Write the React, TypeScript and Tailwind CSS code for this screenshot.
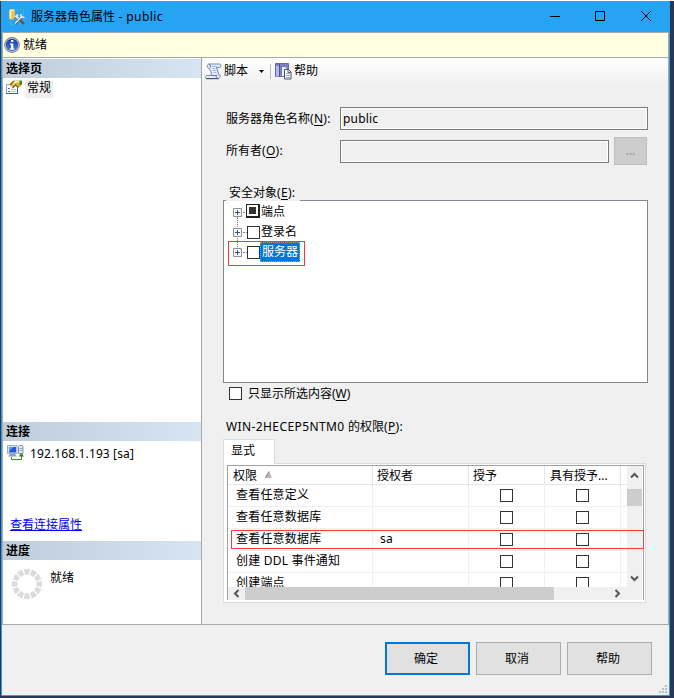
import type { ReactNode } from "react";
import clsx from "clsx";

const permissions = [
  { name: "查看任意定义", grantor: "" },
  { name: "查看任意数据库", grantor: "" },
  { name: "查看任意数据库", grantor: "sa" },
  { name: "创建 DDL 事件通知", grantor: "" },
  { name: "创建端点", grantor: "" },
];

const securables = [
  { name: "端点", partial: true, selected: false },
  { name: "登录名", partial: false, selected: false },
  { name: "服务器", partial: false, selected: true },
];

function DatabaseToolsIcon() {
  return (
    <svg width="16" height="16" viewBox="0 0 16 16" className="shrink-0">
      <path d="M7 .5h7.500V8M1.500 12v3.500H7" fill="none" stroke="#4fc9a0" strokeDasharray="1 1" />
      <path d="M0 1.500C0-.3 6-.3 6 1.500v7.500c0 2-6 2-6 0z" fill="#f0bd48" />
      <path d="M1.500 2v7.500" stroke="#fff2b4" strokeWidth="1.600" />
      <ellipse cx="3" cy="1.500" rx="2.700" ry="1.100" fill="#fbe7a0" />
      <path d="M7 7l4 4" stroke="#e8ecf0" strokeWidth="2" />
      <path d="M10 10l5 5" stroke="#7a4c28" strokeWidth="2.400" />
      <path d="M13 7.500L6 15" stroke="#5b656e" strokeWidth="2.600" />
      <path d="M12.800 7.500L6 14.500" stroke="#eef2f5" strokeWidth="1.300" />
      <path d="M12 5v3l3.500.500" fill="none" stroke="#e9eef2" strokeWidth="1.500" />
      <path d="M5.500 9l3.500-3.500" stroke="#dfe4e8" strokeWidth="2.200" />
      <path d="M5 9.500l2-1" stroke="#4f5a63" />
    </svg>
  );
}

function InfoIcon() {
  return (
    <svg width="16" height="16" viewBox="0 0 16 16" className="shrink-0">
      <defs>
        <linearGradient id="info" x1="0" y1="0" x2="0" y2="1">
          <stop offset="0" stopColor="#1a3f9f" />
          <stop offset="1" stopColor="#4478dc" />
        </linearGradient>
      </defs>
      <circle cx="8" cy="8" r="7.900" fill="#7b7e88" />
      <circle cx="8" cy="8" r="7" fill="#c3c6d0" />
      <circle cx="8" cy="8" r="6.200" fill="url(#info)" />
      <path d="M7 3h2.400v2H7zM6 6.400h3.300v5H10.500v1.300H5.800v-1.300H7V7.700H6z" fill="#fff" />
    </svg>
  );
}

function PropertiesIcon() {
  return (
    <svg width="16" height="16" viewBox="0 0 16 16" className="shrink-0">
      <path d="M.5 4.500h11v9H.5z" fill="#fafcff" stroke="#93a4c0" />
      <path d="M0 13.500h12M11.500 5v9" stroke="#4a6292" />
      <path d="M2 8.500h2M2 11.500h2" stroke="#4d72b8" />
      <path d="M5 9.500h5M5 11.500h5" stroke="#b9c4d8" />
      <path d="M4 4l4-3.500h5.500l1.500 2v4l-3 .500-2.500-2L7 7.500 5 6z" fill="#d9ae38" />
      <path d="M8 1h4.500l1 1.500-4 .500-3 2.500" fill="#fff0a0" />
      <path d="M4 5l4-4M6.500 8l3-3 3 2.500" fill="none" stroke="#795e1c" strokeWidth="1.200" />
      <path d="M13.500 .5H16v4.500h-2.500z" fill="#42903c" />
    </svg>
  );
}

function ServerLinkIcon() {
  return (
    <svg width="17" height="17" viewBox="0 0 17 17" className="shrink-0">
      <path d="M11.500 1.500l1-1h3l.5 1v7h-4.500z" fill="#e5eaf2" stroke="#8594ac" />
      <path d="M12.500 3.500h3M12.500 5.500h3" stroke="#8ba0c4" />
      <path d="M.5.500h9.500v8H.5z" fill="#dce5f4" stroke="#9aaccb" />
      <path d="M2 2h7v5.500H2z" fill="#2455d8" />
      <path d="M2 2h4.500L2 6.500z" fill="#5d98ff" />
      <path d="M3 9h5l2 2.500H1z" fill="#8c9cb8" />
      <path d="M4.500 12v2.500h10V10" fill="none" stroke="#3b8f12" />
      <path d="M11.500 11.500l3-3.500 2.500 3.500z" fill="#2f8a0c" />
    </svg>
  );
}

function ScriptIcon() {
  return (
    <svg width="17" height="17" viewBox="0 0 17 17" className="shrink-0">
      <path
        d="M4 1h10.500c1.700 0 1.700 3.500 0 3.500H11.500L14 12h.5c1.200 0 1 1.500.5 2l-1.500 1.500H1.500C0 15.500 0 12.500 2 12.500h4.500L6 8.500 4 5.500C1.500 5 2 1 4 1z"
        fill="#e4ecfc"
        stroke="#7388ae"
      />
      <path d="M4 1.500c2 0 2 3 .5 3.500M7 12.500h5c-1.500 1-1 2.500.500 2.500" fill="none" stroke="#5f79ab" />
      <path d="M7 3.500h5M7.500 5.500H10M8 7.500h3M8.500 9.500h3" stroke="#a0b7e4" />
      <path d="M1 15.700h12.500" stroke="#33486f" />
    </svg>
  );
}

function HelpBooksIcon() {
  return (
    <svg width="17" height="17" viewBox="0 0 17 17" className="shrink-0">
      <path d="M.5.500h13v13H.5z" fill="#7d80c6" stroke="#6669ac" />
      <path d="M1 3h3v10.500H1z" fill="#b6b9e8" />
      <path d="M4.500 1v13" stroke="#4f5396" />
      <path d="M6.500 3.500h4l1.500 2v8H6.500z" fill="#e7edf8" stroke="#7281a0" />
      <path d="M9.500 6.500h4l2.500 2.500v7H9.500z" fill="#fff" stroke="#43546f" />
      <path d="M13 6.500v3h3" fill="none" stroke="#52627e" />
      <path d="M11 10.500h4M11 12.500h4M11 14.500h4" stroke="#9fb2d2" />
    </svg>
  );
}

function Spinner() {
  return (
    <svg width="32" height="32" viewBox="0 0 32 32" className="shrink-0">
      {Array.from({ length: 12 }, (_, i) => (
        <path key={i} d="M12.800 1.200Q16 .5 19.200 1.200L17.900 6.700H14.100z" fill="#dcdcdc" transform={`rotate(${i * 30} 16 16)`} />
      ))}
    </svg>
  );
}

function Chevron({ d }: { d: string }) {
  return (
    <svg width="9" height="9" viewBox="0 0 9 9">
      <path d={d} fill="none" stroke="#555" strokeWidth="2" />
    </svg>
  );
}

function CheckBox({ className }: { className?: string }) {
  return <span className={clsx("block size-[13px] shrink-0 border border-[#333] bg-white", className)} />;
}

function PanelHeader({ children }: { children: ReactNode }) {
  return (
    <h2 className="flex h-[19px] items-center bg-linear-to-r from-[#bfcddb] to-[#d7e4f2] pl-[3px] text-xs font-bold">
      {children}
    </h2>
  );
}

function Hotkey({ label, k }: { label: string; k: string }) {
  return (
    <span className="whitespace-nowrap">
      {label}
      <span className="tracking-[0.3px]">
        (<u className="underline-offset-2">{k}</u>):
      </span>
    </span>
  );
}

function Sidebar() {
  return (
    <aside className="flex w-[199px] flex-col border-r border-[#a5a5a9] bg-white pt-px">
      <PanelHeader>选择页</PanelHeader>
      <div className="flex h-[344px] items-start gap-[3px] pl-[3px] pt-[2px]">
        <PropertiesIcon />
        <span className="h-[18px] bg-[#f0f0f0] px-[2px] leading-[16px]">常规</span>
      </div>
      <PanelHeader>连接</PanelHeader>
      <div className="flex h-[100px] flex-col justify-between pb-[7px] pl-1 pt-1">
        <div className="flex gap-[6px]">
          <ServerLinkIcon />
          <span className="leading-[18px] tracking-[0.120px]">192.168.1.193 [sa]</span>
        </div>
        <a className="pl-[3px] leading-[18px] text-[#0000ff] underline">查看连接属性</a>
      </div>
      <PanelHeader>进度</PanelHeader>
      <div className="flex gap-[7px] pl-2 pt-2">
        <Spinner />
        <span className="leading-[19px]">就绪</span>
      </div>
    </aside>
  );
}

function Toolbar() {
  return (
    <div className="flex h-[26px] items-center rounded-r-sm bg-linear-to-b from-white to-[#f0f0f0] pl-[3px]">
      <ScriptIcon />
      <span className="ml-[2px]">脚本</span>
      <svg width="5" height="3" viewBox="0 0 5 3" className="ml-[11px]">
        <path d="M0 0h5L2.500 3z" />
      </svg>
      <span className="ml-[6px] h-[15px] w-px bg-[#bdbdbd]" />
      <span className="ml-1">
        <HelpBooksIcon />
      </span>
      <span className="ml-[2px]">帮助</span>
    </div>
  );
}

function SecurablesTree() {
  return (
    <div className="relative h-[183px] w-[425px] border border-[#828790] bg-white pl-[9px] pt-px">
      <span className="absolute -top-px left-[2px] h-px w-[74px] bg-[#f0f0f0]" />
      <span className="absolute left-[13px] top-[16px] h-[32px] border-l border-dotted border-[#808080]" />
      {securables.map((item) => (
        <div key={item.name} className="relative flex h-5 items-center">
          <svg width="9" height="9" viewBox="0 0 9 9">
            <path d="M.5.5h8v8h-8z" fill="#f8f8f8" stroke="#919191" />
            <path d="M2 4.500h5M4.500 2v5" stroke="#3c4f8c" />
          </svg>
          <span className="ml-px w-[4px] border-t border-dotted border-[#808080]" />
          {item.partial ? (
            <span className="-ml-px mb-[2px] flex size-[14px] items-center justify-center border border-b-2 border-r-2 border-[#222] bg-white">
              <span className="size-[7px] bg-[#333]" />
            </span>
          ) : (
            <CheckBox />
          )}
          <span
            className={clsx(
              "h-5",
              item.selected
                ? "w-10 border border-dotted border-[#ff8728] bg-[#0078d7] pl-px leading-[17px] text-white"
                : "pl-px leading-[19px]"
            )}
          >
            {item.name}
          </span>
        </div>
      ))}
      <span className="absolute left-[4px] top-[40px] h-[25px] w-[77px] border border-[#f83a3a]" />
    </div>
  );
}

function PermissionsGrid() {
  const cols = "grid grid-cols-[145px_96px_76px_76px_6px]";
  return (
    <div className="relative h-[135px] w-[417px] border border-b-0 border-[#a0a0a0] bg-white">
      <div className="flex h-[121px]">
        <div className="w-[399px] overflow-hidden">
          <div className={clsx(cols, "h-[19px] border-b border-[#e8e8e8] leading-[19px] *:border-r *:border-[#e5e5e5]")}>
            <span className="flex items-center gap-2 pl-[5px]">
              权限
              <svg width="7" height="7" viewBox="0 0 7 7" className="mb-[2px]">
                <path d="M0 7L4 0l3 7z" fill="#b8b8b8" />
                <path d="M.5 6.500L4 .5" stroke="#858585" />
              </svg>
            </span>
            <span className="pl-1">授权者</span>
            <span className="pl-1">授予</span>
            <span className="pl-[5px]">具有授予...</span>
          </div>
          {permissions.map((row, i) => (
            <div key={i} className={clsx(cols, "h-[22px] border-b border-[#f0f0f0] leading-[20px] *:border-r *:border-[#f0f0f0]")}>
              <span className="pl-2 tracking-[0.200px]">{row.name}</span>
              <span className="pl-[7px] tracking-[0.300px]">{row.grantor}</span>
              <span className="flex items-center justify-center">
                <CheckBox />
              </span>
              <span className="flex items-center justify-center">
                <CheckBox />
              </span>
            </div>
          ))}
        </div>
        <div className="flex w-[15px] flex-col items-center bg-[#f0f0f0] pb-1 pt-[5px]">
          <Chevron d="M1 6.500L4.500 3 8 6.500" />
          <span className="mt-[9px] h-[17px] w-full bg-[#cdcdcd]" />
          <span className="flex-1" />
          <Chevron d="M1 2.500L4.500 6 8 2.500" />
        </div>
      </div>
      <div className="mr-px flex h-[13px] items-center bg-[#f0f0f0] pl-1">
        <Chevron d="M6.500 1L3 4.500 6.500 8" />
        <span className="ml-1 h-full w-[309px] bg-[#cdcdcd]" />
        <span className="ml-[59px]">
          <Chevron d="M2.500 1L6 4.500 2.500 8" />
        </span>
      </div>
      <span className="absolute left-[3px] top-[64px] h-[19px] w-[413px] border border-[#f83a3a]" />
    </div>
  );
}

function RoleForm() {
  return (
    <div className="pl-[21px] pt-[23px]">
      <div className="flex h-[23px] items-center pl-[3px]">
        <span className="w-[114px] pt-px">
          <Hotkey label="服务器角色名称" k="N" />
        </span>
        <span className="h-[23px] w-[308px] border border-[#7a7a7a] pl-[2px] leading-[21px] tracking-[0.200px] shadow-[inset_0_0_0_1px_white]">
          public
        </span>
      </div>
      <div className="mt-[7px] flex h-7 items-center pl-[3px]">
        <span className="w-[114px] pb-px">
          <Hotkey label="所有者" k="O" />
        </span>
        <span className="h-[23px] w-[269px] border border-[#7a7a7a] shadow-[inset_0_0_0_1px_white]" />
        <span className="ml-[5px] flex h-7 w-[33px] items-center justify-center border border-[#bfbfbf] bg-[#ccc] text-[#909090]">
          ...
        </span>
      </div>
      <div className="mt-[19px] h-4 pl-[6px] leading-[17px]">
        <Hotkey label="安全对象" k="E" />
      </div>
      <SecurablesTree />
      <div className="mt-[2px] flex h-[17px] items-center gap-[6px] pl-[6px]">
        <CheckBox />
        <span>
          只显示所选内容(<u className="underline-offset-2">W</u>)
        </span>
      </div>
      <div className="mt-4 h-[21px] pl-[3px] leading-[18px]">
        <span className="tracking-[0.400px]">WIN-2HECEP5NTM0 </span>
        <Hotkey label="的权限" k="P" />
      </div>
      <div className="relative z-10 -mb-px h-[25px] w-[52px] border border-b-0 border-[#dcdcdc] bg-white pl-[7px] leading-[22px]">显式</div>
      <div className="h-[140px] w-[423px] border border-[#dcdcdc] bg-white pl-[3px] pt-px">
        <PermissionsGrid />
      </div>
    </div>
  );
}

function DialogButton({ children, primary }: { children: ReactNode; primary?: boolean }) {
  return (
    <button className={clsx("h-[33px] w-[85px] bg-[#e1e1e1] pr-[3px] pt-px", primary ? "border-2 border-[#0078d7]" : "border border-[#adadad]")}>
      {children}
    </button>
  );
}

export default function App() {
  return (
    <div className="h-[698px] w-[674px] overflow-hidden border-t border-white bg-[#263a58] pl-px font-['Noto_Sans','Noto_Sans_CJK_SC',sans-serif] text-xs text-black">
      <div className="flex h-[695px] w-[669px] flex-col border-x border-b border-[#3a9ade] bg-[#f0f0f0]">
        <header className="flex h-[31px] shrink-0 items-center bg-[#26a3f2] pl-[7px]">
          <DatabaseToolsIcon />
          <h1 className="ml-[6px] flex-1">
            服务器角色属性<span className="tracking-[0.400px]"> - public</span>
          </h1>
          <svg width="102" height="12" viewBox="0 0 102 12" className="mb-px mr-[17px]" fill="none" stroke="#000">
            <path d="M0 6.500h10M45.500 1.500h9v9h-9z" />
            <path d="M91 1l10 10M101 1L91 11" />
          </svg>
        </header>
        <div className="flex h-[593px] shrink-0 flex-col border border-[#a9a9ad]">
          <div className="flex h-[25px] shrink-0 items-center gap-[3px] border-b border-[#a9a9ad] bg-[#ffffe1] pl-px">
            <InfoIcon />
            <span>就绪</span>
          </div>
          <div className="flex flex-1">
            <Sidebar />
            <main className="flex-1">
              <Toolbar />
              <RoleForm />
            </main>
          </div>
        </div>
        <footer className="relative flex gap-[6px] pl-[383px] pt-[17px]">
          <DialogButton primary>确定</DialogButton>
          <DialogButton>取消</DialogButton>
          <DialogButton>帮助</DialogButton>
          <svg width="8" height="8" viewBox="0 0 8 8" className="absolute left-[657px] top-[60px]" fill="#bfbfbf">
            <path d="M6 0h2v2H6zM3 3h2v2H3zM6 3h2v2H6zM0 6h2v2H0zM3 6h2v2H3zM6 6h2v2H6z" />
          </svg>
        </footer>
      </div>
    </div>
  );
}
